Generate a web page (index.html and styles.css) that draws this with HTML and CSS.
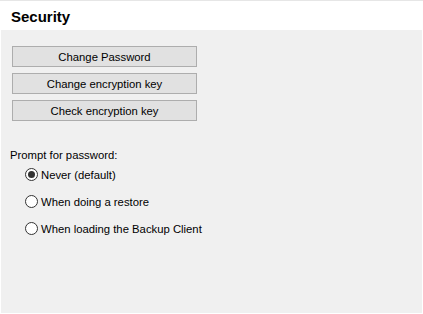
FILE: index.html
```html
<!DOCTYPE html>
<html>
<head>
<meta charset="utf-8">
<link rel="stylesheet" href="styles.css">
</head>
<body>
<div class="page">
  <header class="header"><h1 class="title">Security</h1></header>
  <main class="panel">
    <div class="buttons">
      <button class="btn">Change Password</button>
      <button class="btn">Change encryption key</button>
      <button class="btn">Check encryption key</button>
    </div>
    <div class="label">Prompt for password:</div>
    <div class="radios">
      <label class="radio"><span class="circle checked"></span><span class="rtext">Never (default)</span></label>
      <label class="radio"><span class="circle"></span><span class="rtext">When doing a restore</span></label>
      <label class="radio"><span class="circle"></span><span class="rtext">When loading the Backup Client</span></label>
    </div>
  </main>
</div>
</body>
</html>
```
FILE: styles.css
```css
html, body {
  margin: 0;
  padding: 0;
  background: #ffffff;
}
body {
  width: 423px;
  height: 314px;
  overflow: hidden;
  font-family: "Liberation Sans", Arial, sans-serif;
  font-size: 11.3px;
  color: #000;
}
.page {
  display: flex;
  flex-direction: column;
  height: 314px;
}
.header {
  height: 29px;
  border-top: 1px solid #e6e6e6;
  background: #fff;
  display: flex;
  align-items: center;
  padding-left: 11px;
}
.title {
  margin: 0;
  font-size: 15px;
  font-weight: bold;
  line-height: 18px;
  position: relative;
  top: 1px;
}
.panel {
  margin: 0 1px 1px 1px;
  height: 283px;
  background: #f0f0f0;
  padding: 16px 0 0 9px;
  box-sizing: border-box;
}
.buttons {
  display: flex;
  flex-direction: column;
  gap: 6px;
  margin-left: 2px;
}
.btn {
  width: 185px;
  height: 21px;
  box-sizing: border-box;
  background: #e1e1e1;
  border: 1px solid #adadad;
  font-family: inherit;
  font-size: 11.3px;
  color: #000;
  padding: 0;
  margin: 0;
}
.label {
  margin-top: 28px;
  line-height: 12px;
  height: 12px;
}
.radios {
  display: flex;
  flex-direction: column;
  padding-left: 15px;
}
.radio {
  display: flex;
  align-items: center;
  height: 27px;
  gap: 3px;
}
.circle {
  width: 13px;
  height: 13px;
  box-sizing: border-box;
  border: 1px solid #333;
  border-radius: 50%;
  background: #fff;
  display: flex;
  align-items: center;
  justify-content: center;
}
.circle.checked::after {
  content: "";
  width: 7px;
  height: 7px;
  border-radius: 50%;
  background: #333;
}
.rtext {
  line-height: 14px;
}
```
